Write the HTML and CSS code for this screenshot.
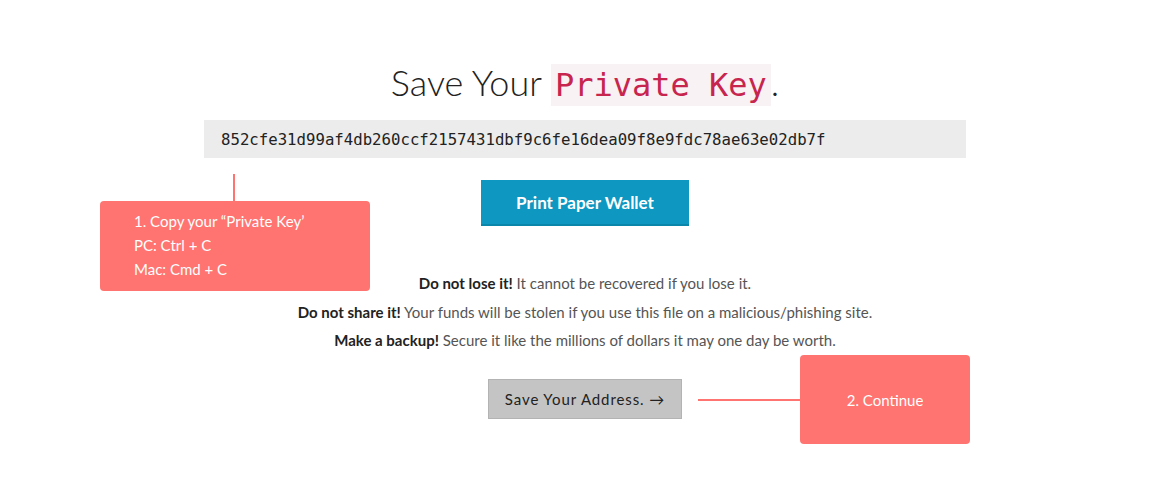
FILE: index.html
```html
<!DOCTYPE html>
<html lang="en">
  <head>
    <meta charset="UTF-8" />
    <meta name="viewport" content="width=device-width, initial-scale=1.0" />
    <title>Save Your Private Key</title>
    <link rel="stylesheet" href="styles.css">
  </head>
  <body>
    <div class="page">
      <!-- Title -->
      <h1 class="title">Save Your <code class="title-code">Private Key</code>.</h1>

      <!-- Private key box -->
      <div class="key-box">852cfe31d99af4db260ccf2157431dbf9c6fe16dea09f8e9fdc78ae63e02db7f</div>

      <button class="btn-print">Print Paper Wallet</button>

      <!-- Warnings -->
      <div class="warnings">
        <p><strong>Do not lose it!</strong> It cannot be recovered if you lose it.</p>
        <p><strong>Do not share it!</strong> Your funds will be stolen if you use this file on a malicious/phishing site.</p>
        <p><strong>Make a backup!</strong> Secure it like the millions of dollars it may one day be worth.</p>
      </div>

      <button class="btn-next">Save Your Address. &rarr;</button>

      <!-- Annotation callouts -->
      <div class="callout-line vline"></div>
      <div class="callout callout-copy">
        <p>1. Copy your &ldquo;Private Key&rsquo;</p>
        <p>PC: Ctrl + C</p>
        <p>Mac: Cmd + C</p>
      </div>

      <div class="callout-line hline"></div>
      <div class="callout callout-continue">2. Continue</div>
    </div>
  </body>
</html>
```

FILE: styles.css
```css
* {
  margin: 0;
  padding: 0;
  box-sizing: border-box;
}

body {
  background-color: #fff;
  font-family: 'Lato', 'Open Sans', sans-serif;
  color: #333;
}

/* Main column, centred on the page */
.page {
  position: relative;
  width: 1170px;
  height: 477px;
  display: flex;
  flex-direction: column;
  align-items: center;
  padding-top: 59px;
}

.title {
  font-size: 36px;
  font-weight: 300;
  color: #222;
  line-height: 46px;
}

.title-code {
  font-family: 'DejaVu Sans Mono', monospace;
  font-size: 32px;
  color: #c7254e;
  background-color: #f9f2f4;
  padding: 2px 4px;
}

.key-box {
  margin-top: 12px;
  width: 762px;
  height: 38px;
  background-color: #ececec;
  font-family: 'DejaVu Sans Mono', monospace;
  font-size: 15.7px;
  color: #222;
  padding-left: 17px;
  display: flex;
  align-items: center;
}

.btn-print {
  margin-top: 22px;
  width: 208px;
  height: 46px;
  border: none;
  border-bottom: 2px solid #0b86ab;
  background-color: #0e97c0;
  color: #fff;
  font-family: 'Lato', sans-serif;
  font-weight: 700;
  font-size: 17px;
}

.warnings {
  margin-top: 43px;
  text-align: center;
  font-size: 15px;
  color: #555;
}

.warnings p {
  line-height: 28.5px;
}

.warnings strong {
  color: #222;
}

.btn-next {
  margin-top: 24px;
  width: 194px;
  height: 40px;
  background-color: #c4c4c4;
  border: 1px solid #b3b3b3;
  color: #222;
  font-family: 'Lato', sans-serif;
  font-size: 15px;
  letter-spacing: 0.9px;
}

/* Annotations */
.callout {
  position: absolute;
  background-color: #ff7470;
  border-radius: 4px;
  color: #fff;
  font-size: 15px;
}

.callout-copy {
  left: 100px;
  top: 201px;
  width: 270px;
  height: 90px;
  padding: 8px 0 0 34px;
}

.callout-copy p {
  line-height: 24px;
}

.callout-continue {
  left: 800px;
  top: 355px;
  width: 170px;
  height: 89px;
  display: flex;
  align-items: center;
  justify-content: center;
}

.callout-line {
  position: absolute;
  background-color: #ff7470;
}

.vline {
  left: 233px;
  top: 174px;
  width: 2px;
  height: 27px;
}

.hline {
  left: 698px;
  top: 399px;
  width: 102px;
  height: 2px;
}
```
